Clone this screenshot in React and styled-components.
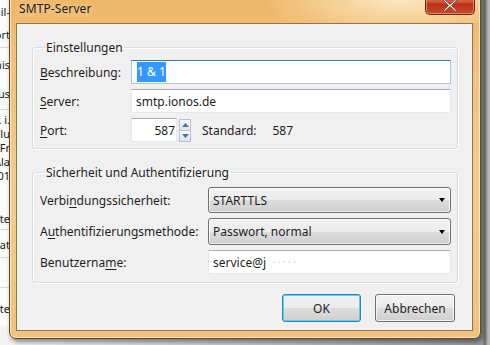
import styled, { createGlobalStyle } from "styled-components";

const GlobalStyle = createGlobalStyle`
  html, body {
    margin: 0;
    padding: 0;
    width: 490px;
    height: 345px;
    overflow: hidden;
    background: #bdbdbd;
  }
  * { box-sizing: border-box; }
`;

const hintergrund = [
  { h: 22, t: "Mail-" },
  { h: 24, t: "Export" },
  { h: 3, line: true },
  { h: 28, t: "Ergebnis" },
  { h: 30, t: "Status" },
  { h: 3, line: true },
  { h: 14, t: "Nr. i." },
  { h: 14, t: "Inhalt lu" },
  { h: 14, t: "Von Fr" },
  { h: 14, t: "Ala" },
  { h: 14, t: "2101" },
  { h: 26, t: "" },
  { h: 20, t: "Texte" },
  { h: 3, line: true },
  { h: 24, t: "Format" },
  { h: 3, line: true },
  { h: 26, t: "" },
  { h: 3, line: true },
  { h: 36, t: "Website" },
];

export default function App() {
  return (
    <>
      <GlobalStyle />
      <Desktop>
        <HintergrundListe>
          {hintergrund.map((z, i) =>
            z.line ? <Trenner key={i} /> : <HZeile key={i} $h={z.h}>{z.t}</HZeile>
          )}
        </HintergrundListe>

        <Fenster>
          <Titelleiste>
            <Titel>SMTP-Server</Titel>
            <Schliessen>
              <svg width="14" height="11" viewBox="0 0 14 11">
                <path d="M2 0 L7 4.5 L12 0 L14 0 L8.5 5.5 L14 11 L12 11 L7 6.5 L2 11 L0 11 L5.5 5.5 L0 0 Z" fill="#fff" stroke="#5a2414" strokeWidth="0.6" />
              </svg>
            </Schliessen>
          </Titelleiste>

          <Inhalt>
            <Gruppe>
              <Legende>Einstellungen</Legende>
              <Raster $spalte="91px">
                <Label><u>B</u>eschreibung:</Label>
                <Eingabe $fokus>
                  <Markiert>1 &amp; 1</Markiert>
                </Eingabe>

                <Label><u>S</u>erver:</Label>
                <Eingabe>smtp.ionos.de</Eingabe>

                <Label><u>P</u>ort:</Label>
                <PortZeile>
                  <PortFeld>587</PortFeld>
                  <Spinner>
                    <SpinTaste>
                      <svg width="7" height="4" viewBox="0 0 7 4"><path d="M0 4 L3.5 0 L7 4 Z" fill="#4a6fa0" /></svg>
                    </SpinTaste>
                    <SpinTaste>
                      <svg width="7" height="4" viewBox="0 0 7 4"><path d="M0 0 L3.5 4 L7 0 Z" fill="#4a6fa0" /></svg>
                    </SpinTaste>
                  </Spinner>
                  <Standard>Standard:</Standard>
                  <span>587</span>
                </PortZeile>
              </Raster>
            </Gruppe>

            <Gruppe $abstand>
              <Legende>Sicherheit und Authentifizierung</Legende>
              <Raster $spalte="168px" $zweite>
                <Label>Verbi<u>n</u>dungssicherheit:</Label>
                <Auswahl $h={26}>STARTTLS<Pfeil /></Auswahl>

                <Label>A<u>u</u>thentifizierungsmethode:</Label>
                <Auswahl $h={27}>Passwort, normal<Pfeil /></Auswahl>

                <Label>Benutzerna<u>m</u>e:</Label>
                <Eingabe>
                  service@j<Verwischt>·····</Verwischt>
                </Eingabe>
              </Raster>
            </Gruppe>

            <Tastenleiste>
              <Taste $standard>OK</Taste>
              <Taste>Abbrechen</Taste>
            </Tastenleiste>
          </Inhalt>
        </Fenster>
      </Desktop>
    </>
  );
}

const Desktop = styled.div`
  position: relative;
  width: 490px;
  height: 345px;
  overflow: hidden;
  background: linear-gradient(90deg, #f4f4f4 0px, #f4f4f4 10px, #9a9a9a 482px, #6d6d6d 485px, #b8b8b8 488px);
  font-family: "Noto Sans", "Open Sans", sans-serif;
  font-size: 12px;
  color: #1e1e1e;
`;

const HintergrundListe = styled.div`
  position: absolute;
  left: -50px;
  top: 0;
  width: 60px;
  display: flex;
  flex-direction: column;
  background: #fbfbfb;
`;

const HZeile = styled.div`
  height: ${(p) => p.$h}px;
  display: flex;
  align-items: center;
  justify-content: flex-end;
  white-space: nowrap;
  font-size: 11px;
  line-height: 13px;
  overflow: hidden;
  color: #202020;
`;

const Trenner = styled.div`
  height: 3px;
  border-top: 1px solid #d8d8d8;
  margin-top: 1px;
`;

const Fenster = styled.div`
  position: absolute;
  left: 9px;
  top: -10px;
  width: 472px;
  height: 349px;
  display: flex;
  flex-direction: column;
  padding: 0 7px 7px 6px;
  border: 1px solid #5f4a2c;
  border-radius: 7px;
  background: linear-gradient(180deg, #eeb463 0px, #f2c17c 60px, #f5cb8c 200px, #f1c27e 349px);
  box-shadow: 2px 3px 5px rgba(0, 0, 0, 0.45), inset 0 0 0 1px rgba(255, 240, 210, 0.7);
`;

const Titelleiste = styled.div`
  height: 32px;
  display: flex;
  align-items: flex-end;
  justify-content: space-between;
  padding: 0 0 6px 0;
  position: relative;
  background: radial-gradient(ellipse 140px 40px at 390px 8px, rgba(255, 238, 205, 0.9), rgba(255, 238, 205, 0));
  margin: 0 -7px 0 -6px;
  padding-left: 9px;
`;

const Titel = styled.div`
  font-size: 12px;
  color: #1a1a1a;
  letter-spacing: 0.1px;
  text-shadow: 0 0 6px rgba(255, 240, 210, 0.9);
`;

const Schliessen = styled.div`
  position: absolute;
  right: 5px;
  top: 1px;
  width: 50px;
  height: 23px;
  display: flex;
  align-items: flex-end;
  justify-content: center;
  padding-bottom: 3px;
  border: 1px solid #6b2b18;
  border-top: none;
  border-radius: 0 0 5px 5px;
  background: linear-gradient(180deg, #e9866a 0%, #d1553a 45%, #b8321a 55%, #c94a2c 100%);
  box-shadow: inset 0 0 0 1px rgba(255, 190, 170, 0.5);
`;

const Inhalt = styled.div`
  flex: 1;
  display: flex;
  flex-direction: column;
  padding: 16px 14px 0 15px;
  background: #f0f0f0;
  border: 1px solid #8a7656;
`;

const Gruppe = styled.fieldset`
  margin: ${(p) => (p.$abstand ? "16px" : "0")} 0 0 0;
  padding: 5px 6px ${(p) => (p.$abstand ? "8px" : "6px")} 7px;
  border: 1px solid #d5dfe5;
  border-radius: 3px;
  box-shadow: inset 1px 1px 0 #ffffff, 1px 1px 0 #ffffff;
  min-width: 0;
`;

const Legende = styled.legend`
  padding: 0 1px;
  margin-left: 5px;
  font-size: 12px;
  line-height: 15px;
  color: #1e1e1e;
`;

const Raster = styled.div`
  display: grid;
  grid-template-columns: ${(p) => p.$spalte} 1fr;
  row-gap: 5px;
  align-items: center;
  padding-top: ${(p) => (p.$zweite ? "2px" : "0")};
`;

const Label = styled.div`
  white-space: nowrap;
  & u {
    text-decoration-thickness: 1px;
    text-underline-offset: 2px;
  }
`;

const Eingabe = styled.div`
  height: 24px;
  display: flex;
  align-items: center;
  padding: 0 4px;
  background: #ffffff;
  white-space: nowrap;
  overflow: hidden;
  border: 1px solid ${(p) => (p.$fokus ? "#a7cbe6" : "#e3e9ef")};
  border-top-color: ${(p) => (p.$fokus ? "#3d7bad" : "#abadb3")};
`;

const Markiert = styled.span`
  background: #3399ff;
  color: #ffffff;
  padding: 1px 0 2px;
  margin-left: 1px;
`;

const Verwischt = styled.span`
  color: #d8d8d8;
  letter-spacing: 2px;
  margin-left: 6px;
`;

const PortZeile = styled.div`
  display: flex;
  align-items: center;
  height: 24px;
`;

const PortFeld = styled(Eingabe)`
  width: 46px;
  justify-content: flex-end;
  padding: 0 1px;
`;

const Spinner = styled.div`
  display: flex;
  flex-direction: column;
  margin-left: 2px;
  height: 23px;
`;

const SpinTaste = styled.div`
  width: 12px;
  flex: 1;
  display: flex;
  align-items: center;
  justify-content: center;
  border: 1px solid #b9c2cc;
  background: linear-gradient(180deg, #f5f8fb, #dfe5ec);
  & + & {
    border-top: none;
  }
`;

const Standard = styled.span`
  margin-left: 11px;
  margin-right: 16px;
`;

const Auswahl = styled.div`
  height: ${(p) => p.$h}px;
  position: relative;
  display: flex;
  align-items: center;
  padding: 0 0 0 4px;
  border: 1px solid #707070;
  border-radius: 3px;
  background: linear-gradient(180deg, #f2f2f2 0%, #ebebeb 50%, #dddddd 51%, #cfcfcf 100%);
  box-shadow: inset 0 0 0 1px rgba(255, 255, 255, 0.7);
`;

const Pfeil = styled.span`
  position: absolute;
  right: 5px;
  top: 50%;
  margin-top: -2px;
  width: 0;
  height: 0;
  border-left: 3.5px solid transparent;
  border-right: 3.5px solid transparent;
  border-top: 4px solid #000;
`;

const Tastenleiste = styled.div`
  display: flex;
  justify-content: flex-end;
  gap: 14px;
  margin-top: 11px;
  padding-right: 3px;
`;

const Taste = styled.button`
  width: ${(p) => (p.$standard ? "79px" : "80px")};
  height: 28px;
  font-family: inherit;
  font-size: 12px;
  color: #1e1e1e;
  border-radius: 3px;
  border: 1px solid ${(p) => (p.$standard ? "#3c7fb1" : "#707070")};
  background: linear-gradient(180deg, #f2f2f2 0%, #ebebeb 50%, #dddddd 51%, #cfcfcf 100%);
  box-shadow: inset 0 0 0 1px ${(p) => (p.$standard ? "#48d7f8" : "rgba(255,255,255,0.7)")};
  padding: 0;
`;
